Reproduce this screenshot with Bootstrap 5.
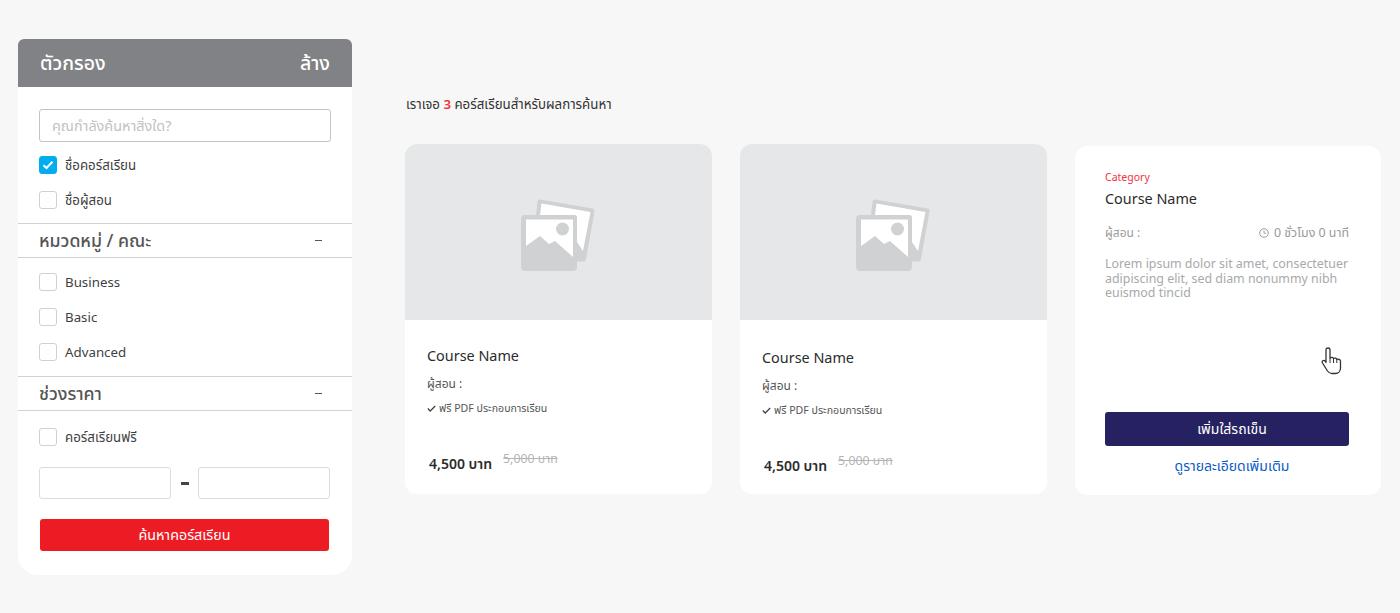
<!DOCTYPE html>
<html lang="th">
<head>
  <meta charset="UTF-8">
  <meta name="viewport" content="width=device-width, initial-scale=1.0">
  <title>ค้นหาคอร์สเรียน</title>
  <link href="https://cdn.jsdelivr.net/npm/bootstrap@5.3.0/dist/css/bootstrap.min.css" rel="stylesheet">
  <style>
    body {
      background-color: #f7f7f7;
      font-family: "Noto Sans", "Noto Sans Thai", "DejaVu Sans", sans-serif;
      color: #333;
      height: 613px;
      overflow: hidden;
    }
    /* Sidebar */
    .filter-box {
      width: 334px;
      height: 536px;
      margin: 39px 0 0 18px;
      background: #fff;
      border-radius: 6px 6px 20px 20px;
      flex: none;
    }
    .filter-head {
      height: 48px;
      background: #808285;
      color: #fff;
      font-size: 19.5px;
      font-weight: 500;
      padding: 0 22px;
      border-radius: 6px 6px 0 0;
    }
    .search-part { padding: 22px 21px 14px; }
    .filter-search {
      height: 33px;
      margin-bottom: 14px;
      border: 1px solid #c4c4c4;
      border-radius: 3px;
      font-size: 14.4px;
      padding: 0 12px;
      color: #333;
      outline: 0;
    }
    .filter-search::placeholder { color: #c2c2c2; }
    .filter-check {
      height: 18px;
      font-size: 13.3px;
      color: #3f3f3f;
      gap: 8px;
    }
    .filter-check > span + span { padding-top: 2px; }
    .check-mark {
      width: 18px;
      height: 18px;
      border: 1px solid #d0d0d0;
      border-radius: 3px;
      background: #fff;
      flex: none;
    }
    .check-mark.is-on {
      background: #00aeef;
      border-color: #00aeef;
    }
    .check-stack { gap: 17px; }
    .filter-section {
      height: 35px;
      border-top: 1px solid #d2d2d2;
      border-bottom: 1px solid #d2d2d2;
      font-size: 17.7px;
      font-weight: 500;
      color: #555;
      padding: 0 30px 0 21px;
    }
    .section-dash {
      width: 7px;
      height: 1.5px;
      background: #555;
    }
    .group-part { padding: 15px 21px 15px; }
    .price-part { padding: 17px 21px 0; }
    .price-row { margin-top: 21px; width: 291px; }
    .price-box {
      height: 32px;
      border: 1px solid #dcdcdc;
      border-radius: 3px;
      background: #fff;
      width: 132px;
    }
    .price-dash {
      width: 8px;
      height: 3px;
      background: #444;
    }
    .btn-find {
      display: block;
      height: 32px;
      width: 289px;
      margin: 20px 0 0 1px;
      background: #ed1c24;
      border: 0;
      border-radius: 3px;
      color: #fff;
      font-size: 14.3px;
      padding: 0;
    }
    /* Results */
    .result-area {
      margin-left: 53px;
      width: 976px;
    }
    .result-text {
      font-size: 13.3px;
      color: #333;
      height: 20px;
      margin: 94px 0 30px 1px;
      line-height: 20px;
    }
    .result-text b { color: #ef3340; font-weight: 600; }
    .course-grid {
      display: grid;
      grid-template-columns: 307px 307px 306px;
      gap: 28px;
      align-items: start;
    }
    .course-box {
      height: 350px;
      background: #fff;
      border-radius: 12px;
      overflow: hidden;
    }
    .course-thumb {
      height: 176px;
      padding: 6px 2px 0 0;
      background: #e6e7e8;
    }
    .course-name {
      font-size: 14.4px;
      color: #2b2b2b;
      line-height: 20px;
    }
    .teacher-line { font-size: 12px; color: #555; line-height: 18px; margin-top: 9px; }
    .perk-line { font-size: 10.6px; color: #555; line-height: 14px; margin-top: 8px; gap: 3px; }
    .price-line { margin: 39px 0 0 2px; gap: 11px; }
    .price-now { font-size: 14px; font-weight: 600; color: #2b2b2b; line-height: 20px; }
    .price-old { font-size: 12.3px; color: #b5b5b5; text-decoration: line-through; line-height: 16px; margin-top: -11px; }
    .body-low { padding: 26px 22px 0; }
    .body-low-2 { padding-top: 28px; }
    .detail-box {
      height: 349px;
      margin-top: 2px;
      padding: 24px 32px 0 30px;
      position: relative;
    }
    .cat-label { font-size: 10.5px; color: #ef3340; line-height: 14px; }
    .detail-box .course-name { margin-top: 5px; }
    .grey-line { font-size: 12px; color: #9a9a9a; line-height: 18px; margin-top: 15px; }
    .clock-line { gap: 5px; font-size: 12.4px; }
    .detail-text { font-size: 12.4px; color: #a7a9ac; line-height: 14.6px; margin: 15px 0 0; }
    .btn-cart {
      display: block;
      width: 100%;
      height: 34px;
      margin-top: 111px;
      background: #262262;
      color: #fff;
      border: 0;
      border-radius: 3px;
      font-size: 14px;
      padding: 0 0 0 10px;
    }
    .more-link {
      display: block;
      margin-top: 10px;
      padding-left: 10px;
      font-size: 14px;
      color: #0b5cc4;
      text-decoration: none;
      line-height: 20px;
    }
    .hand-cursor { position: absolute; left: 246px; top: 201px; }
  </style>
</head>
<body>
  <div class="d-flex">
    <!-- Filter -->
    <aside class="filter-box">
      <div class="filter-head d-flex justify-content-between align-items-center">
        <span>ตัวกรอง</span><span>ล้าง</span>
      </div>

      <div class="search-part">
        <input class="filter-search w-100 d-block" type="text" placeholder="คุณกำลังค้นหาสิ่งใด?">
        <div class="d-flex flex-column check-stack">
          <div class="filter-check d-flex align-items-center">
            <span class="check-mark is-on d-flex align-items-center justify-content-center">
              <svg width="12" height="10" viewBox="0 0 12 10"><path d="M1.5 5.2 4.5 8 10.5 1.8" fill="none" stroke="#fff" stroke-width="2"/></svg>
            </span>
            <span>ชื่อคอร์สเรียน</span>
          </div>
          <div class="filter-check d-flex align-items-center">
            <span class="check-mark"></span><span>ชื่อผู้สอน</span>
          </div>
        </div>
      </div>

      <div class="filter-section d-flex justify-content-between align-items-center">
        <span>หมวดหมู่ / คณะ</span><span class="section-dash"></span>
      </div>
      <div class="group-part d-flex flex-column check-stack">
        <div class="filter-check d-flex align-items-center"><span class="check-mark"></span><span>Business</span></div>
        <div class="filter-check d-flex align-items-center"><span class="check-mark"></span><span>Basic</span></div>
        <div class="filter-check d-flex align-items-center"><span class="check-mark"></span><span>Advanced</span></div>
      </div>

      <div class="filter-section d-flex justify-content-between align-items-center">
        <span>ช่วงราคา</span><span class="section-dash"></span>
      </div>
      <div class="price-part">
        <div class="filter-check d-flex align-items-center"><span class="check-mark"></span><span>คอร์สเรียนฟรี</span></div>
        <div class="price-row d-flex align-items-center justify-content-between">
          <div class="price-box"></div>
          <span class="price-dash"></span>
          <div class="price-box"></div>
        </div>
        <button class="btn-find" type="button">ค้นหาคอร์สเรียน</button>
      </div>
    </aside>

    <!-- Results -->
    <main class="result-area">
      <p class="result-text">เราเจอ <b>3</b> คอร์สเรียนสำหรับผลการค้นหา</p>
      <div class="course-grid">
        <div class="course-box">
          <div class="course-thumb d-flex align-items-center justify-content-center">
            <svg width="74" height="72" viewBox="0 0 74 72">
              <path d="M19 .5 71.500 9.500a2.500 2.500 0 0 1 2 3L65 60a3 3 0 0 1-3 2.500H50V16H15l1.500-13a2.500 2.500 0 0 1 2.500-2.500Z" fill="#d0d1d2"/>
              <path d="M20.500 4.500 69.500 13 62 52 56 43V19a3 3 0 0 0-3-3H19Z" fill="#fff"/>
              <rect x="0" y="16" width="56" height="56" rx="4" fill="#d0d1d2"/>
              <path d="M5 20.500H52V58L34 42 28 45 19 37 5 47Z" fill="#fff"/>
              <circle cx="41.500" cy="30" r="6.500" fill="#d0d1d2"/>
            </svg>
          </div>
          <div class="body-low">
            <div class="course-name">Course Name</div>
            <div class="teacher-line">ผู้สอน :</div>
            <div class="perk-line d-flex align-items-center">
              <svg width="9" height="7" viewBox="0 0 9 7"><path d="M.8 3.5 3.2 6 8.2 1" fill="none" stroke="#444" stroke-width="1.3"/></svg>
              <span>ฟรี PDF ประกอบการเรียน</span>
            </div>
            <div class="price-line d-flex align-items-center">
              <span class="price-now">4,500 บาท</span><span class="price-old">5,000 บาท</span>
            </div>
          </div>
        </div>

        <div class="course-box">
          <div class="course-thumb d-flex align-items-center justify-content-center">
            <svg width="74" height="72" viewBox="0 0 74 72">
              <path d="M19 .5 71.500 9.500a2.500 2.500 0 0 1 2 3L65 60a3 3 0 0 1-3 2.500H50V16H15l1.500-13a2.500 2.500 0 0 1 2.500-2.500Z" fill="#d0d1d2"/>
              <path d="M20.500 4.500 69.500 13 62 52 56 43V19a3 3 0 0 0-3-3H19Z" fill="#fff"/>
              <rect x="0" y="16" width="56" height="56" rx="4" fill="#d0d1d2"/>
              <path d="M5 20.500H52V58L34 42 28 45 19 37 5 47Z" fill="#fff"/>
              <circle cx="41.500" cy="30" r="6.500" fill="#d0d1d2"/>
            </svg>
          </div>
          <div class="body-low body-low-2">
            <div class="course-name">Course Name</div>
            <div class="teacher-line">ผู้สอน :</div>
            <div class="perk-line d-flex align-items-center">
              <svg width="9" height="7" viewBox="0 0 9 7"><path d="M.8 3.5 3.2 6 8.2 1" fill="none" stroke="#444" stroke-width="1.3"/></svg>
              <span>ฟรี PDF ประกอบการเรียน</span>
            </div>
            <div class="price-line d-flex align-items-center">
              <span class="price-now">4,500 บาท</span><span class="price-old">5,000 บาท</span>
            </div>
          </div>
        </div>

        <div class="course-box detail-box">
          <div class="cat-label">Category</div>
          <div class="course-name">Course Name</div>
          <div class="grey-line d-flex justify-content-between">
            <span>ผู้สอน :</span>
            <span class="clock-line d-flex align-items-center">
              <svg width="10" height="10" viewBox="0 0 10 10"><circle cx="5" cy="5" r="4.300" fill="none" stroke="#9a9a9a"/><path d="M5 2.500V5.300H7" fill="none" stroke="#9a9a9a" stroke-width=".9"/></svg>
              <span>0 ชั่วโมง 0 นาที</span>
            </span>
          </div>
          <p class="detail-text">Lorem ipsum dolor sit amet, consectetuer adipiscing elit, sed diam nonummy nibh euismod tincid</p>
          <button class="btn-cart" type="button">เพิ่มใส่รถเข็น</button>
          <a class="more-link text-center" href="#">ดูรายละเอียดเพิ่มเติม</a>
          <svg class="hand-cursor" width="22" height="28" viewBox="0 0 22 28">
            <path d="M5 2.500c0-2 4-2 4 0V11c1.500-1 3-.8 3.500.5 1.500-.8 2.800-.4 3.200.8 1.500-.6 3.800 0 3.800 2V21c0 3-2 5.500-5 5.500H11c-2 0-3.500-1-4.500-2.500L1.500 16c-1-1.700 1-3.500 2.500-2L5 15.500Z" fill="#fff" stroke="#333" stroke-width="1.300" stroke-linejoin="round"/>
            <path d="M9 11v5M12.500 11.500V16M15.800 12.300V16" fill="none" stroke="#333" stroke-width="1"/>
          </svg>
        </div>
      </div>
    </main>
  </div>
</body>
</html>
